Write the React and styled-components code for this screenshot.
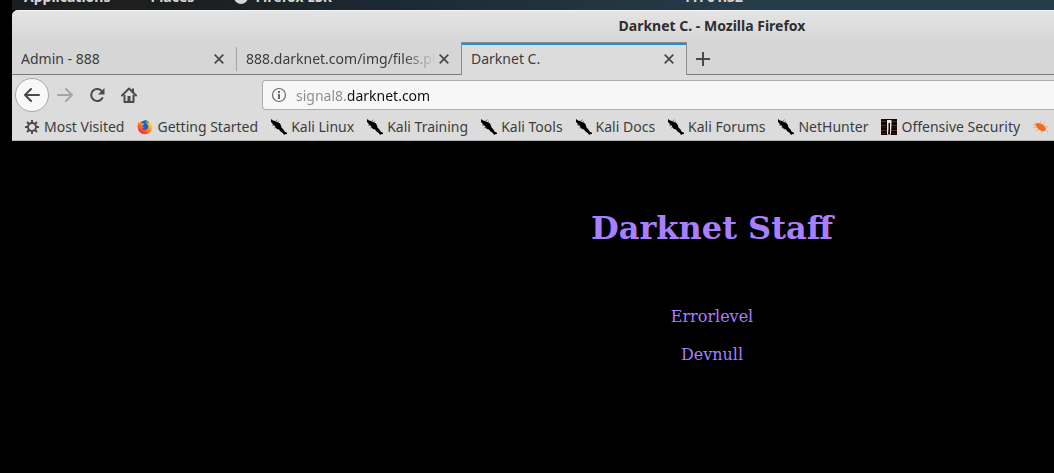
import React from "react";
import styled, { createGlobalStyle, css } from "styled-components";

const GlobalStyle = createGlobalStyle`
  * { box-sizing: border-box; }
  body {
    margin: 0;
    background: #000;
    font-family: "Noto Sans", "Open Sans", sans-serif;
    font-size: 14px;
    line-height: 20px;
    color: #3c3c3c;
  }
  button, input { font: inherit; color: inherit; }
  button { border: 0; padding: 0; background: none; }
`;

const Desktop = styled.div`
  margin-left: 12px;
`;

const TopPanel = styled.nav`
  display: grid;
  grid-template-columns: 1fr auto 311px;
  align-content: end;
  height: 10px;
  padding: 0 0 3px 12px;
  overflow: hidden;
  background: linear-gradient(90deg, #1c1d1e 0%, #1c2022 20%, #1c2a36 38%, #263c48 70%, #263c48 100%);
`;

const PanelMenus = styled.div`
  display: flex;
  gap: 40px;
`;

const PanelButton = styled.button`
  display: flex;
  align-items: center;
  gap: 7px;
  font-weight: 700;
  color: #d6d6d6;
  white-space: nowrap;
`;

const PanelDot = styled.span`
  width: 14px;
  height: 14px;
  border-radius: 50%;
  background: #d6d6d6;
`;

const Chrome = styled.header`
  background: #dcdcdc;
  border-radius: 6px 0 0 0;
  border-bottom: 1px solid #b4b4b4;
  overflow: hidden;
`;

const TitleBar = styled.div`
  height: 32px;
  padding-left: 358px;
  line-height: 30px;
  border-top: 1px solid #f6f6f6;
  background: linear-gradient(#e4e4e4, #d6d6d6);
  color: #2e2e2e;
  font-weight: 700;
  text-align: center;
`;

const TabStrip = styled.div`
  display: flex;
  height: 33px;
  background: #d6d6d6;
  box-shadow: inset 0 -1px #7c7c7c;
`;

const Tab = styled.div`
  display: flex;
  align-items: center;
  width: 224px;
  padding: 0 12px 0 9px;
  ${(p) =>
    p.$divided &&
    css`
      width: 225px;
      &::before {
        content: "";
        align-self: stretch;
        width: 1px;
        margin: 5px 9px 4px -9px;
        background: #a2a2a2;
      }
    `}
  ${(p) =>
    p.$active &&
    css`
      width: 226px;
      background: #dcdcdc;
      border: 1px solid #8c8c8c;
      border-bottom: 0;
      box-shadow: inset 0 2px #1e8fd0;
    `}
`;

const TabLabel = styled.button`
  flex: 1;
  min-width: 0;
  overflow: hidden;
  white-space: nowrap;
  text-align: left;
  ${(p) =>
    p.$faded &&
    css`
      mask-image: linear-gradient(90deg, #000 calc(100% - 32px), transparent);
    `}
`;

const IconButton = styled.button`
  display: grid;
  place-items: center;
  flex: none;
  width: ${(p) => p.$size}px;
  height: ${(p) => p.$size}px;
  color: #4a4a4a;
  &:disabled { color: #a4a4a4; }
`;

const CloseButton = styled(IconButton)`
  margin-left: 4px;
`;

const NewTabButton = styled(IconButton)`
  align-self: center;
`;

const BackButton = styled(IconButton)`
  border: 1px solid #a8a8a8;
  border-radius: 50%;
  background: #f8f8f8;
`;

const NavBar = styled.div`
  display: flex;
  align-items: center;
  height: 40px;
  padding-left: 3px;
`;

const AddressField = styled.label`
  display: flex;
  align-items: center;
  flex: 1;
  height: 30px;
  margin-left: 117px;
  padding-left: 8px;
  border: 1px solid #adadad;
  border-right: 0;
  border-radius: 4px 0 0 4px;
  background: #f7f7f7;
  color: #6a6a6a;
`;

const AddressInput = styled.input`
  flex: 1;
  height: 24px;
  margin-left: 9px;
  padding: 0;
  border: 0;
  outline: 0;
  color: transparent;
  caret-color: #111;
  background: linear-gradient(90deg, #8a8a8a 52px, #111 52px);
  background-clip: text;
  -webkit-background-clip: text;
`;

const Bookmarks = styled.nav`
  display: flex;
  align-items: center;
  gap: 13px;
  height: 25px;
  padding: 0 0 2px 12px;
`;

const Bookmark = styled.a`
  display: flex;
  align-items: center;
  gap: 4px;
  flex: none;
  color: inherit;
  text-decoration: none;
  white-space: nowrap;
`;

const Page = styled.main`
  padding: 68px 0 0 358px;
  background: #000;
  color: #a87fff;
  font-family: "DejaVu Serif", serif;
  font-size: 16px;
  line-height: 19px;
  text-align: center;
`;

const Heading = styled.h1`
  margin: 0 0 60px;
  font-size: 32px;
  line-height: 38px;
`;

const Member = styled.p`
  margin: 0 0 19px;
`;

const Icon = ({ size = 16, children, ...rest }) => (
  <svg width={size} height={size} viewBox={`0 0 ${size} ${size}`} fill="none" aria-hidden="true" {...rest}>
    {children}
  </svg>
);

const CloseIcon = () => (
  <Icon size={10} stroke="currentColor" strokeWidth="1.8">
    <path d="M.7.7l8.6 8.6M9.3.7L.7 9.3" />
  </Icon>
);

const PlusIcon = () => (
  <Icon size={14} stroke="currentColor" strokeWidth="2">
    <path d="M7 0v14M0 7h14" />
  </Icon>
);

const BackIcon = () => (
  <Icon stroke="currentColor" strokeWidth="2" strokeLinecap="round" strokeLinejoin="round">
    <path d="M15 8H1.5M7 2L1 8l6 6" />
  </Icon>
);

const ForwardIcon = () => (
  <Icon stroke="currentColor" strokeWidth="2" strokeLinecap="round" strokeLinejoin="round">
    <path d="M1 8h13.500M9 2l6 6-6 6" />
  </Icon>
);

const ReloadIcon = () => (
  <Icon>
    <path d="M13 4.500A6 6 0 1 0 13.400 11" stroke="currentColor" strokeWidth="2" strokeLinecap="round" />
    <path d="M15.500 1v6.500H9z" fill="currentColor" />
  </Icon>
);

const HomeIcon = () => (
  <Icon>
    <path d="M1 8.500L8 1.500l7 7" stroke="currentColor" strokeWidth="2" strokeLinecap="round" strokeLinejoin="round" />
    <path d="M3.500 8v7h9V8" stroke="currentColor" strokeWidth="2" strokeLinejoin="round" />
    <path d="M6.500 9h3v6h-3z" fill="currentColor" />
    <path d="M11 1.500h2v4h-2z" fill="currentColor" />
  </Icon>
);

const InfoIcon = () => (
  <Icon>
    <circle cx="8" cy="8" r="6.500" stroke="currentColor" strokeWidth="1.200" />
    <path d="M7 7h2v5H7zM7 4h2v2H7z" fill="currentColor" />
  </Icon>
);

const GearIcon = () => (
  <Icon stroke="#484848">
    <circle cx="8" cy="8" r="4" strokeWidth="1.900" />
    <path
      d="M8 1v2.500M8 12.500V15M1 8h2.500M12.500 8H15M3 3l2 2M11 11l2 2M13 3l-2 2M5 11l-2 2"
      strokeWidth="1.900"
    />
  </Icon>
);

const FirefoxIcon = () => (
  <Icon>
    <defs>
      <linearGradient id="fox" x1="13" y1="1" x2="3" y2="14" gradientUnits="userSpaceOnUse">
        <stop offset="0" stopColor="#fff04a" />
        <stop offset=".35" stopColor="#ffb52a" />
        <stop offset=".65" stopColor="#ff6a25" />
        <stop offset="1" stopColor="#f5144f" />
      </linearGradient>
    </defs>
    <circle cx="8" cy="8" r="6.500" fill="#1c62c4" />
    <path
      d="M1.500 3l1 1.300L3.800 2.500l1 1.800 2.600.3-.6 1.200-1.500.9.300 1.300 1.900.7c-1 .2-1.500.8-2.300.6.6 1.600 2.300 2.200 3.900 1.500C11.600 9.600 12 7 10.500 5.500L9.200 3.800 9.700.8c2.600.5 5.600 3.400 5.600 7.200a7.300 7.300 0 0 1-14.600 0C.7 6 .8 4.300 1.500 3z"
      fill="url(#fox)"
    />
    <path d="M7 1c3-.6 5 1.500 5 4-1.500-1.700-3-1.500-5-4z" fill="#2787dd" />
  </Icon>
);

const KaliIcon = () => (
  <Icon>
    <path
      fill="#000"
      d="M0 0l2 1.500L4 2l2 1 1.500.5L9 4.500l1 2 .5 2 2 2 1 2 2.500 1.200V15l-2 .2-1 .8-1.200-2L9.500 12.500 8 10.500 6 10 4.500 8.500 4 7 2 5.500 1 4 0 3z"
    />
    <path d="M4.500 2.200l2-1.500M6.500 3.200L8 2M1 6l2 .5M3 9l2-.6" stroke="#555" strokeWidth=".7" />
  </Icon>
);

const OffensiveIcon = () => (
  <Icon>
    <path d="M0 0h16v16H0z" fill="#160606" />
    <path d="M0 2h5v1H0zM0 6h5v1H0zM0 11h5v1H0zM11 2h5v1h-5zM11 6h5v1h-5zM11 11h5v1h-5z" fill="#5b2726" />
    <path d="M1 8h4v1H1zM12 8h4v1h-4zM0 14h5v1H0zM11 14h5v1h-5z" fill="#36100f" />
    <path d="M6 1h4.500v5L10 15H9V4H7.500v6L7 15H6V9z" fill="#e8e4e4" />
    <path d="M6 15h4v1H6z" fill="#8f8a8a" />
  </Icon>
);

const ExploitIcon = () => (
  <Icon>
    <path d="M2 5l3-1 3 .5 3 2 2 3-1 2.500-3 .2-3-1.700L3.500 8z" fill="#f26a1b" />
    <path
      d="M4 5L2 2.500M7 5l.5-3M10 6l2-3M12 8l3-.5M12 11l3 2M9 12l-.5 2M6 10l-3 2M4 8L0 8.500M3 6L0 5"
      stroke="#f5a26c"
      strokeWidth=".9"
    />
  </Icon>
);

const BOOKMARKS = [
  ["Most Visited", GearIcon],
  ["Getting Started", FirefoxIcon],
  ["Kali Linux", KaliIcon],
  ["Kali Training", KaliIcon],
  ["Kali Tools", KaliIcon],
  ["Kali Docs", KaliIcon],
  ["Kali Forums", KaliIcon],
  ["NetHunter", KaliIcon],
  ["Offensive Security", OffensiveIcon],
];

const TABS = [
  { title: "Admin - 888" },
  { title: "888.darknet.com/img/files.php", divided: true, faded: true },
  { title: "Darknet C.", active: true },
];

export default function App() {
  return (
    <>
      <GlobalStyle />
      <Desktop>
        <TopPanel>
          <PanelMenus>
            <PanelButton>Applications</PanelButton>
            <PanelButton>Places</PanelButton>
            <PanelButton>
              <PanelDot />
              Firefox ESR
            </PanelButton>
          </PanelMenus>
          <PanelButton>Fri 01:32</PanelButton>
        </TopPanel>
        <Chrome>
          <TitleBar>Darknet C. - Mozilla Firefox</TitleBar>
          <TabStrip>
            {TABS.map((tab) => (
              <Tab key={tab.title} $active={tab.active} $divided={tab.divided}>
                <TabLabel $faded={tab.faded}>{tab.title}</TabLabel>
                <CloseButton $size={10} aria-label={`Close ${tab.title}`}>
                  <CloseIcon />
                </CloseButton>
              </Tab>
            ))}
            <NewTabButton $size={32} aria-label="New tab">
              <PlusIcon />
            </NewTabButton>
          </TabStrip>
          <NavBar>
            <BackButton $size={34} aria-label="Back">
              <BackIcon />
            </BackButton>
            <IconButton $size={32} aria-label="Forward" disabled>
              <ForwardIcon />
            </IconButton>
            <IconButton $size={32} aria-label="Reload">
              <ReloadIcon />
            </IconButton>
            <IconButton $size={32} aria-label="Home">
              <HomeIcon />
            </IconButton>
            <AddressField>
              <InfoIcon />
              <AddressInput type="text" aria-label="Address" defaultValue="signal8.darknet.com" />
            </AddressField>
          </NavBar>
          <Bookmarks>
            {BOOKMARKS.map(([label, Glyph]) => (
              <Bookmark key={label} href="#">
                <Glyph />
                {label}
              </Bookmark>
            ))}
            <Bookmark href="#" aria-label="Exploit-DB">
              <ExploitIcon />
            </Bookmark>
          </Bookmarks>
        </Chrome>
        <Page>
          <Heading>Darknet Staff</Heading>
          <Member>Errorlevel</Member>
          <Member>Devnull</Member>
        </Page>
      </Desktop>
    </>
  );
}
